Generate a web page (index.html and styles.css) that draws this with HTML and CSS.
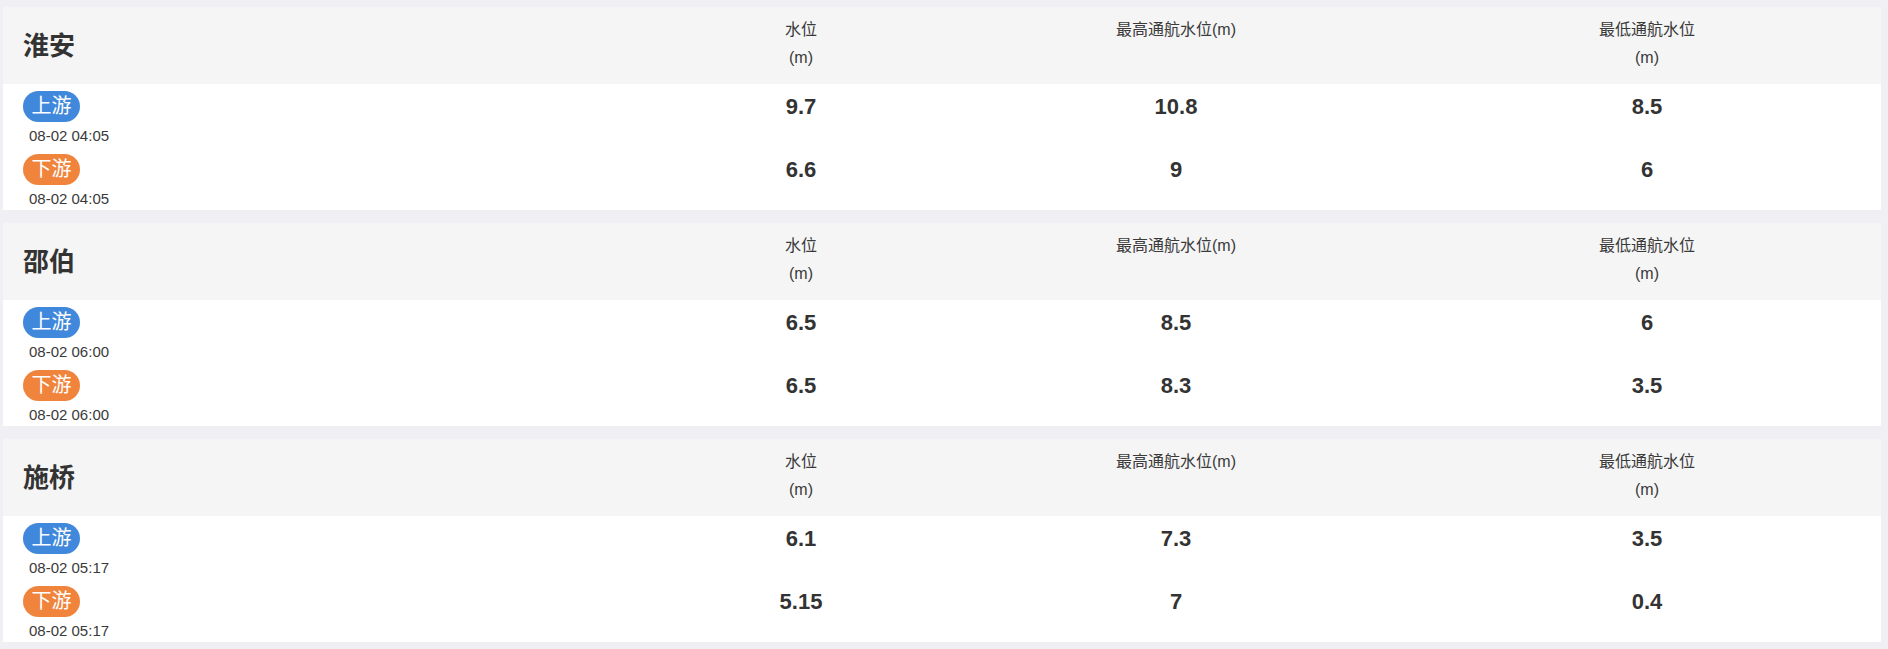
FILE: index.html
```html
<!DOCTYPE html>
<html lang="zh-CN">
<head>
<meta charset="utf-8">
<title>水位</title>
<link rel="stylesheet" href="styles.css">
</head>
<body>
<div class="page">
  <section class="card">
    <div class="grid head">
      <div class="name">淮安</div>
      <div class="th">水位<br>(m)</div>
      <div class="th">最高通航水位(m)</div>
      <div class="th">最低通航水位<br>(m)</div>
    </div>
    <div class="grid data">
      <div class="loc"><span class="badge up">上游</span><div class="time">08-02 04:05</div></div>
      <div class="val">9.7</div><div class="val">10.8</div><div class="val">8.5</div>
    </div>
    <div class="grid data">
      <div class="loc"><span class="badge down">下游</span><div class="time">08-02 04:05</div></div>
      <div class="val">6.6</div><div class="val">9</div><div class="val">6</div>
    </div>
  </section>
  <section class="card">
    <div class="grid head">
      <div class="name">邵伯</div>
      <div class="th">水位<br>(m)</div>
      <div class="th">最高通航水位(m)</div>
      <div class="th">最低通航水位<br>(m)</div>
    </div>
    <div class="grid data">
      <div class="loc"><span class="badge up">上游</span><div class="time">08-02 06:00</div></div>
      <div class="val">6.5</div><div class="val">8.5</div><div class="val">6</div>
    </div>
    <div class="grid data">
      <div class="loc"><span class="badge down">下游</span><div class="time">08-02 06:00</div></div>
      <div class="val">6.5</div><div class="val">8.3</div><div class="val">3.5</div>
    </div>
  </section>
  <section class="card">
    <div class="grid head">
      <div class="name">施桥</div>
      <div class="th">水位<br>(m)</div>
      <div class="th">最高通航水位(m)</div>
      <div class="th">最低通航水位<br>(m)</div>
    </div>
    <div class="grid data">
      <div class="loc"><span class="badge up">上游</span><div class="time">08-02 05:17</div></div>
      <div class="val">6.1</div><div class="val">7.3</div><div class="val">3.5</div>
    </div>
    <div class="grid data">
      <div class="loc"><span class="badge down">下游</span><div class="time">08-02 05:17</div></div>
      <div class="val">5.15</div><div class="val">7</div><div class="val">0.4</div>
    </div>
  </section>
</div>
</body>
</html>
```
FILE: styles.css
```css
html, body {
  margin: 0;
  padding: 0;
  background: #efeff4;
}
body {
  font-family: "Liberation Sans", "Noto Sans CJK SC", sans-serif;
  color: #333;
}
.page {
  display: flex;
  flex-direction: column;
  gap: 13px;
  padding: 7px 7px 7px 3px;
}
.card {
  background: #fff;
}
.grid {
  display: grid;
  grid-template-columns: 660px 276px 474px 468px;
}
.head {
  background: #f5f5f5;
  height: 77px;
}
.name {
  align-self: center;
  padding-left: 20px;
  font-size: 26px;
  font-weight: bold;
  line-height: 30px;
}
.th {
  text-align: center;
  font-size: 16px;
  line-height: 28px;
  padding-top: 9px;
  color: #3a3a3a;
}
.data {
  height: 63px;
}
.loc {
  padding: 7px 0 0 20px;
}
.badge {
  display: inline-block;
  height: 31px;
  line-height: 31px;
  padding: 0 8.5px;
  border-radius: 16px;
  color: #fff;
  font-size: 20px;
}
.badge.up { background: #3f88db; }
.badge.down { background: #f0843c; }
.time {
  margin: 5px 0 0 6px;
  font-size: 15px;
  line-height: 17px;
  color: #3a3a3a;
}
.val {
  text-align: center;
  padding-top: 7px;
  font-size: 22px;
  line-height: 31px;
  font-weight: bold;
}
```
